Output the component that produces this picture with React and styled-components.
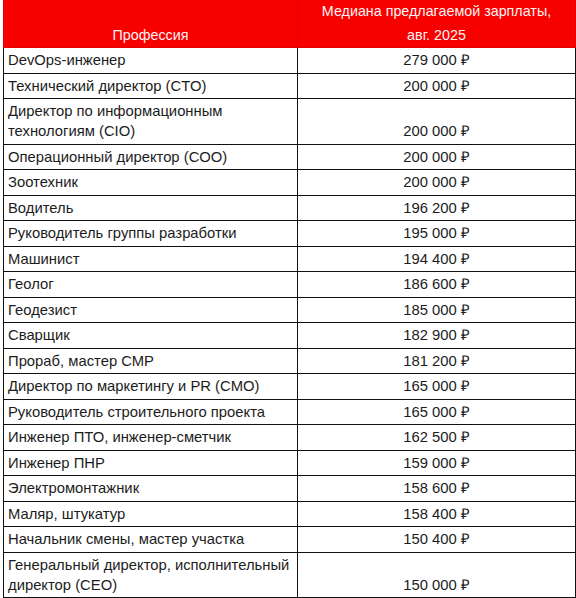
import styled, { createGlobalStyle } from 'styled-components'

const GlobalStyle = createGlobalStyle`
  body {
    margin: 0;
    background: #fff;
    font-family: "Liberation Sans", Arial, sans-serif;
  }
`

const Wrap = styled.div`
  padding: 0 1px 0 3px;
`

const Table = styled.table`
  width: 572px;
  border-collapse: collapse;
  table-layout: fixed;
  font-size: 14.8px;
  color: #1c1c1c;
`

const Col = styled.col`
  width: ${props => props.w}px;
`

const HeadCell = styled.th`
  box-sizing: border-box;
  background: #f70000;
  color: #fff3f3;
  font-size: 14.3px;
  font-weight: normal;
  text-align: center;
  vertical-align: bottom;
  line-height: 23.5px;
  padding: 0 14px;
  border: 1px solid #e40000;
  border-top: none;
`

const Cell = styled.td`
  box-sizing: border-box;
  border: 1px solid #111;
  padding: 2px 4px 2.5px;
  line-height: 20px;
  vertical-align: bottom;
  text-align: ${props => (props.center ? 'center' : 'left')};
`

const rows = [
  ['DevOps-инженер', '279 000 ₽'],
  ['Технический директор (CTO)', '200 000 ₽'],
  ['Директор по информационным технологиям (CIO)', '200 000 ₽'],
  ['Операционный директор (COO)', '200 000 ₽'],
  ['Зоотехник', '200 000 ₽'],
  ['Водитель', '196 200 ₽'],
  ['Руководитель группы разработки', '195 000 ₽'],
  ['Машинист', '194 400 ₽'],
  ['Геолог', '186 600 ₽'],
  ['Геодезист', '185 000 ₽'],
  ['Сварщик', '182 900 ₽'],
  ['Прораб, мастер СМР', '181 200 ₽'],
  ['Директор по маркетингу и PR (CMO)', '165 000 ₽'],
  ['Руководитель строительного проекта', '165 000 ₽'],
  ['Инженер ПТО, инженер-сметчик', '162 500 ₽'],
  ['Инженер ПНР', '159 000 ₽'],
  ['Электромонтажник', '158 600 ₽'],
  ['Маляр, штукатур', '158 400 ₽'],
  ['Начальник смены, мастер участка', '150 400 ₽'],
  ['Генеральный директор, исполнительный директор (CEO)', '150 000 ₽'],
]

export default function App() {
  return (
    <Wrap>
      <GlobalStyle />
      <Table>
        <colgroup>
          <Col w={294} />
          <Col w={278} />
        </colgroup>
        <thead>
          <tr>
            <HeadCell>Профессия</HeadCell>
            <HeadCell>Медиана предлагаемой зарплаты, авг. 2025</HeadCell>
          </tr>
        </thead>
        <tbody>
          {rows.map(([name, salary]) => (
            <tr key={name}>
              <Cell>{name}</Cell>
              <Cell center>{salary}</Cell>
            </tr>
          ))}
        </tbody>
      </Table>
    </Wrap>
  )
}
